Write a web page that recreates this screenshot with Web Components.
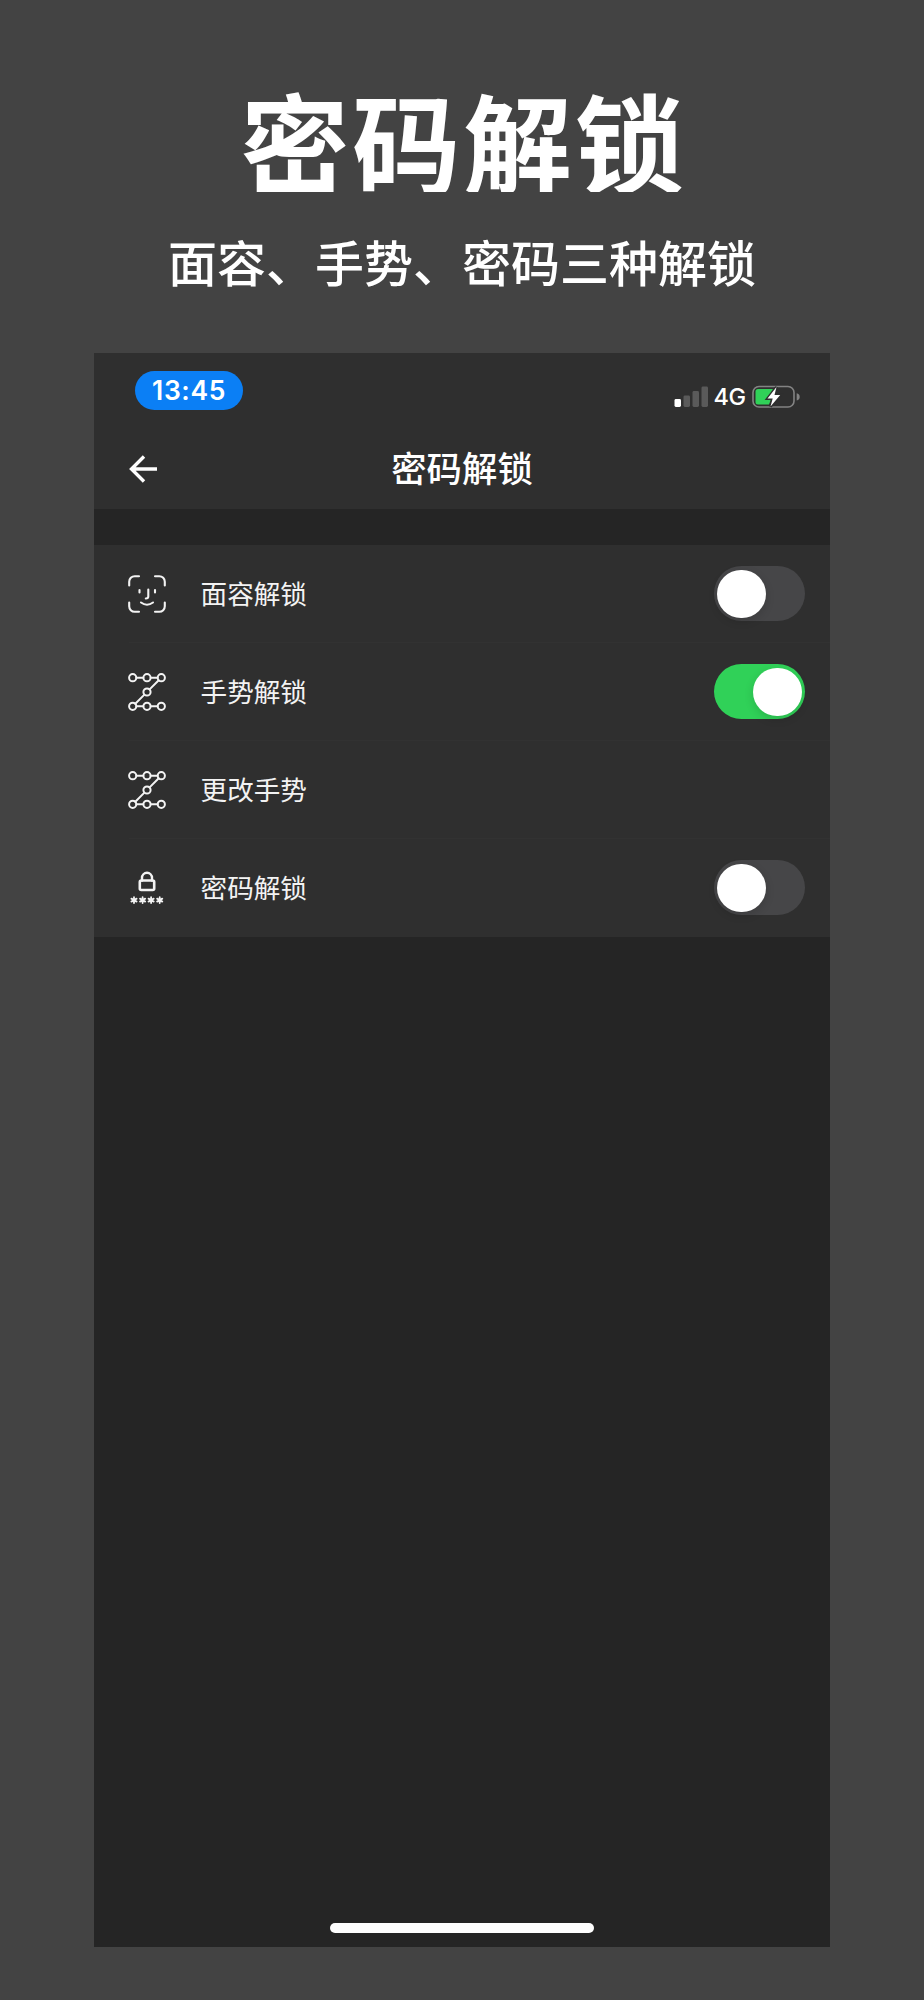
<!DOCTYPE html>
<html lang="zh-CN">
<head>
<meta charset="utf-8">
<title>密码解锁</title>
<style>
  body {
    margin: 0;
    background: #434343;
    color: #fff;
    font-family: "Noto Sans CJK SC", sans-serif;
  }
</style>
</head>
<body>
<promo-page>
  <span slot="title">密码解锁</span>
  <span slot="subtitle">面容、手势、密码三种解锁</span>
  <phone-screen>
    <status-bar time="13:45" network="4G"></status-bar>
    <nav-bar>密码解锁</nav-bar>
    <settings-list>
      <setting-row icon="face" toggle="off">面容解锁</setting-row>
      <setting-row icon="gesture" toggle="on">手势解锁</setting-row>
      <setting-row icon="gesture">更改手势</setting-row>
      <setting-row icon="lock" toggle="off">密码解锁</setting-row>
    </settings-list>
  </phone-screen>
</promo-page>

<script>
const icons = {
  face: `
    <g stroke-width="2.1">
      <path d="M1.2 10.5V6.700a5.500 5.500 0 0 1 5.500-5.500H11M27 1.200h4.300a5.500 5.500 0 0 1 5.500 5.500V10.500M36.800 27.500v3.800a5.500 5.500 0 0 1-5.500 5.500H27M11 36.800H6.700a5.500 5.500 0 0 1-5.500-5.500V27.500"/>
      <path d="M11.500 15v2.500M27 15v2.500M20.300 14.500v7q0 2-2.500 2M13 27.500q6 4.500 12 0"/>
    </g>`,
  gesture: `
    <g stroke-width="2">
      <circle cx="4.7" cy="4.7" r="3.6"/><circle cx="19" cy="4.7" r="3.6"/><circle cx="33.3" cy="4.7" r="3.6"/>
      <circle cx="19" cy="19" r="3.6"/>
      <circle cx="4.7" cy="33.3" r="3.6"/><circle cx="19" cy="33.3" r="3.6"/><circle cx="33.3" cy="33.3" r="3.6"/>
      <path d="M8.4 4.700h6.900M22.700 4.700h6.900M30.700 7.300l-9.100 9.100M16.400 21.600l-9.100 9.100M8.400 33.300h6.900M22.700 33.300h6.900"/>
    </g>`,
  lock: `
    <rect x="11.8" y="11.500" width="14.4" height="9.500" rx="1.4" stroke-width="2.600"/>
    <path d="M14 11.500V8.800a5 5 0 0 1 10 0V11.500" stroke-width="2.400"/>
    <g stroke-width="1.8">
      ${[6, 14.6, 23.1, 31.7].map(x =>
        `<path d="M${x} 28.200v5.800M${x - 2.6} 29.600l5.200 3M${x + 2.6} 29.600l-5.200 3"/>`).join("")}
    </g>`
};

class PromoPage extends HTMLElement {
  constructor() {
    super();
    this.attachShadow({mode: "open"}).innerHTML = `
      <style>
        :host {
          display: flex;
          flex-direction: column;
          align-items: center;
          height: 2000px;
          overflow: hidden;
        }
        header {
          height: 353px;
          text-align: center;
          white-space: nowrap;
        }
        h1 {
          margin: 72px 0 0;
          height: 120px;
          overflow: hidden;
          font-size: 108.5px;
          line-height: 134px;
          font-weight: 700;
          letter-spacing: 3px;
          text-indent: 3px;
        }
        p {
          margin: 39px 0 0;
          font-size: 49px;
          line-height: 60px;
          font-weight: 500;
        }
      </style>
      <header>
        <h1><slot name="title"></slot></h1>
        <p><slot name="subtitle"></slot></p>
      </header>
      <slot></slot>
    `;
  }
}

class PhoneScreen extends HTMLElement {
  constructor() {
    super();
    this.attachShadow({mode: "open"}).innerHTML = `
      <style>
        :host {
          display: flex;
          flex-direction: column;
          width: 736px;
          height: 1593.5px;
          background: #252525;
        }
        .home {
          width: 264px;
          height: 9.5px;
          margin: auto auto 14px;
          border-radius: 5px;
          background: #fff;
        }
      </style>
      <slot></slot>
      <div class="home"></div>
    `;
  }
}

class StatusBar extends HTMLElement {
  constructor() {
    super();
    this.attachShadow({mode: "open"}).innerHTML = `
      <style>
        :host {
          display: flex;
          justify-content: space-between;
          align-items: flex-start;
          box-sizing: border-box;
          height: 76px;
          padding: 17.5px 30px 0 41px;
          background: #2f2f2f;
          font-family: Inter, sans-serif;
        }
        .time {
          width: 108px;
          height: 39px;
          border-radius: 19.5px;
          background: #0b7ff5;
          text-align: center;
          font-size: 26.5px;
          line-height: 39px;
          font-weight: 560;
          letter-spacing: .6px;
        }
        .right {
          display: flex;
          align-items: center;
          height: 24px;
          margin-top: 14px;
        }
        .network {
          width: 32px;
          margin: 0 6.5px 0 5px;
          font-size: 23.5px;
          line-height: 24px;
          font-weight: 460;
          letter-spacing: -.4px;
        }
        svg { display: block; }
      </style>
      <div class="time"></div>
      <div class="right">
        <svg width="35" height="24" viewBox="0 0 35 24">
          <rect x=".5" y="14" width="6.5" height="8" rx="1.4" fill="#fff"/>
          <g fill="#5a5a5a">
            <rect x="9.5" y="10.5" width="6.5" height="11.5" rx="1.4"/>
            <rect x="18.5" y="6" width="6.5" height="16" rx="1.4"/>
            <rect x="27.5" y="1.5" width="6.5" height="20.5" rx="1.4"/>
          </g>
        </svg>
        <span class="network"></span>
        <svg width="48" height="24" viewBox="0 0 48 24">
          <rect x="1" y="1.5" width="41" height="20.5" rx="6" fill="none" stroke="#838383" stroke-width="1.6"/>
          <path d="M44.7 8.3q3 .8 3 3.6t-3 3.6z" fill="#838383"/>
          <path d="M6 4h15L16.5 13h3L17 19.5H6Q3.5 19.5 3.5 17V6.5Q3.5 4 6 4z" fill="#30d158"/>
          <path d="M24.5 2L15.5 13.5h5.2L18.5 21.5L28.2 10h-5.7z" fill="#fff" stroke="#2f2f2f" stroke-width="2.8" paint-order="stroke"/>
        </svg>
      </div>
    `;
    this.shadowRoot.querySelector(".time").textContent = this.getAttribute("time");
    this.shadowRoot.querySelector(".network").textContent = this.getAttribute("network");
  }
}

class NavBar extends HTMLElement {
  constructor() {
    super();
    this.attachShadow({mode: "open"}).innerHTML = `
      <style>
        :host {
          display: grid;
          grid-template-columns: 66px 1fr 66px;
          align-items: center;
          height: 80px;
          background: #2f2f2f;
        }
        svg { margin-left: 34px; }
        h2 {
          margin: 0;
          padding-bottom: 5px;
          text-align: center;
          font-size: 35.4px;
          line-height: 75px;
          font-weight: 500;
        }
      </style>
      <svg width="32" height="32" viewBox="0 0 32 32" fill="none" stroke="#fff" stroke-width="3.4">
        <path d="M29 16H4M16 3.5L3.5 16L16 28.5"/>
      </svg>
      <h2><slot></slot></h2>
    `;
  }
}

class SettingsList extends HTMLElement {
  constructor() {
    super();
    this.attachShadow({mode: "open"}).innerHTML = `
      <style>
        :host {
          display: block;
          margin-top: 36px;
          background: #2f2f2f;
        }
        ::slotted(:not(:last-child)) {
          background: linear-gradient(#323232, #323232) 35px 100% / 100% 1px no-repeat;
        }
      </style>
      <slot></slot>
    `;
  }
}

class SettingRow extends HTMLElement {
  constructor() {
    super();
    const toggle = this.getAttribute("toggle");
    this.attachShadow({mode: "open"}).innerHTML = `
      <style>
        :host {
          display: flex;
          align-items: center;
          height: 97.9px;
          padding: 0 25px 0 34.4px;
        }
        .label {
          flex: 1;
          margin-left: 34.2px;
          padding-bottom: 2px;
          font-size: 26.6px;
          line-height: 40px;
          font-weight: 400;
          color: #f3f3f3;
        }
        .toggle {
          box-sizing: border-box;
          display: flex;
          width: 91px;
          height: 55px;
          padding: 3.4px;
          border-radius: 28px;
          background: #464648;
        }
        .toggle.on {
          justify-content: flex-end;
          background: #30d158;
        }
        .knob {
          width: 48.2px;
          height: 48.2px;
          border-radius: 50%;
          background: #fff;
          box-shadow: 0 3px 10px rgba(0, 0, 0, .14);
        }
      </style>
      <svg width="38" height="38" viewBox="0 0 38 38" fill="none" stroke="#f3f3f3" stroke-linecap="round">
        ${icons[this.getAttribute("icon")]}
      </svg>
      <span class="label"><slot></slot></span>
      ${toggle ? `<div class="toggle ${toggle}"><div class="knob"></div></div>` : ""}
    `;
  }
}

customElements.define("promo-page", PromoPage);
customElements.define("phone-screen", PhoneScreen);
customElements.define("status-bar", StatusBar);
customElements.define("nav-bar", NavBar);
customElements.define("settings-list", SettingsList);
customElements.define("setting-row", SettingRow);
</script>
</body>
</html>
